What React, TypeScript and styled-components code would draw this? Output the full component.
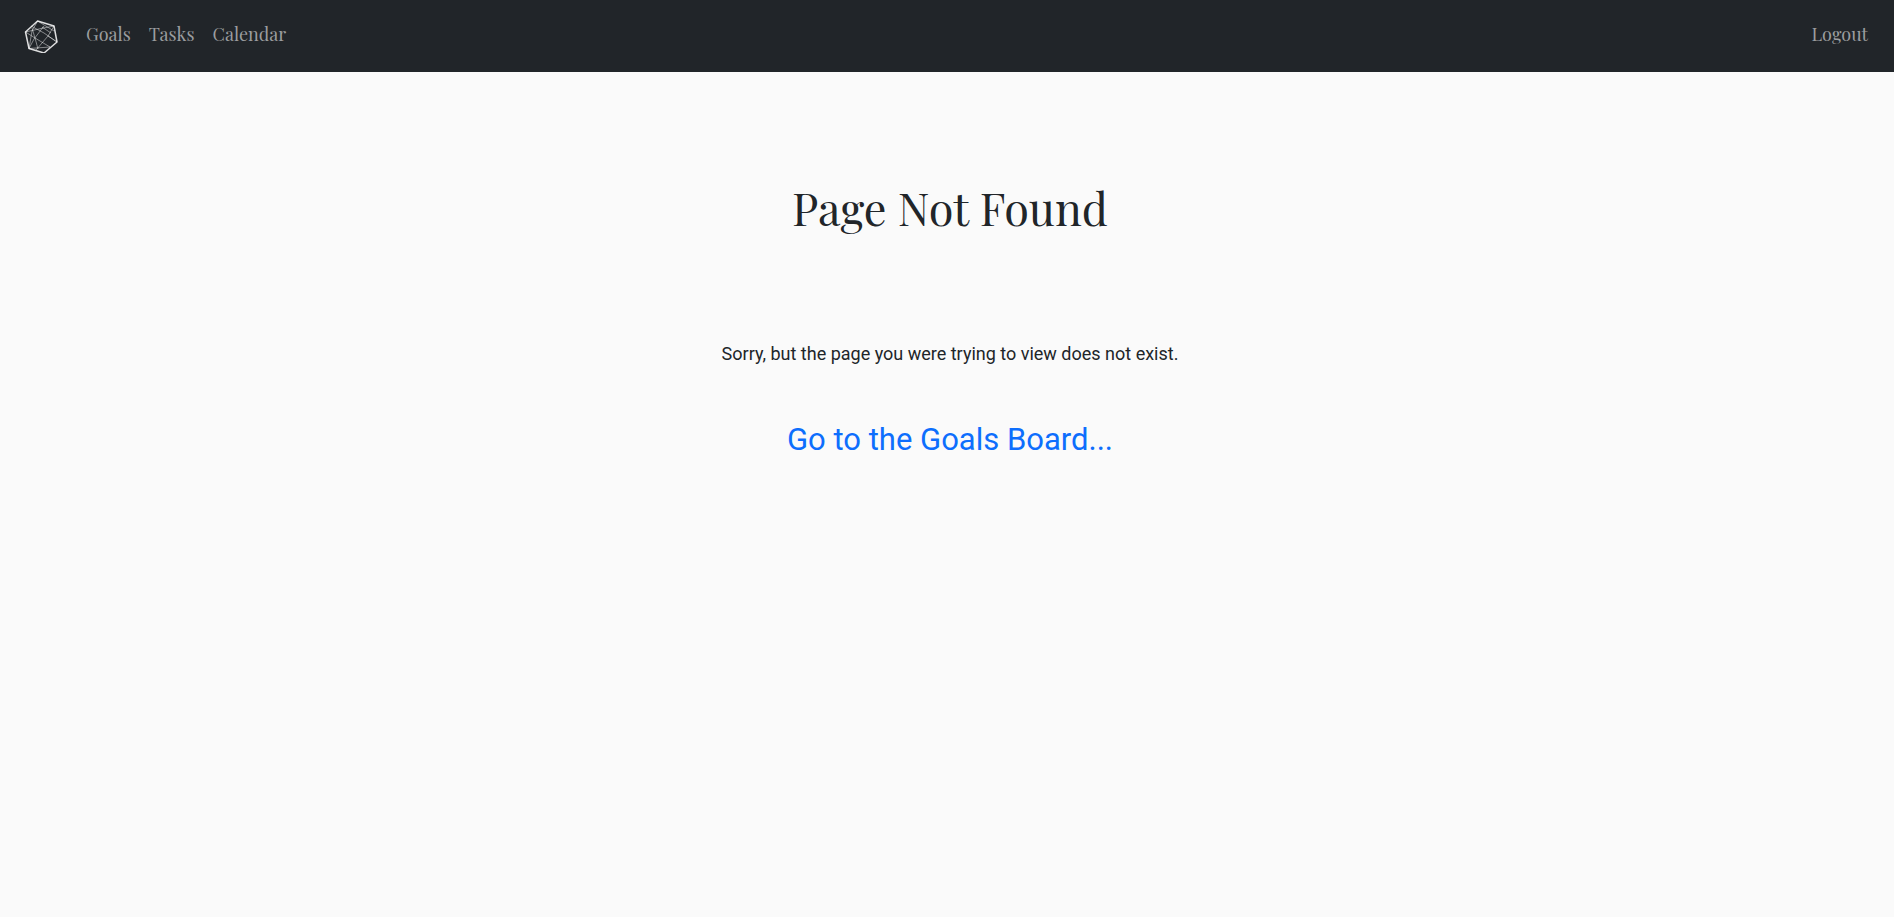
import React from "react";
import styled, { createGlobalStyle } from "styled-components";

const GlobalStyle = createGlobalStyle`
  *, *::before, *::after { box-sizing: border-box; }
  body {
    margin: 0;
    min-height: 100vh;
    background: #fafafa;
    color: #212529;
    font-family: Roboto, sans-serif;
    font-size: 18px;
    line-height: 27px;
  }
`;

const serif = `"Playfair Display", "Liberation Serif", serif`;

const Navbar = styled.nav`
  display: flex;
  align-items: center;
  min-height: 72px;
  padding: 0 17px 0 24px;
  background: #212529;
`;

const Brand = styled.a`
  display: flex;
  margin-right: 19px;
`;

const NavList = styled.ul<{ $end?: boolean }>`
  display: flex;
  margin: 0;
  margin-left: ${({ $end }) => ($end ? "auto" : "0")};
  padding: 0 0 4px;
  list-style: none;
`;

const NavLink = styled.a`
  display: block;
  padding: 8px 9px;
  color: #9b9d9f;
  font-family: ${serif};
  font-size: 18px;
  text-decoration: none;
`;

const Main = styled.main`
  display: flex;
  flex-direction: column;
  align-items: center;
  padding: 108px 8px 48px 14px;
  text-align: center;
`;

const Title = styled.h1`
  margin: 0 0 106px;
  font-family: ${serif};
  font-size: 45px;
  font-weight: 400;
  line-height: 54px;
`;

const Message = styled.p`
  margin: 0 0 54px;
`;

const BoardLink = styled.a`
  color: #0d6efd;
  font-size: 31px;
  line-height: 38px;
  text-decoration: none;
`;

const Logo = () => (
  <svg width="34" height="34" viewBox="0 0 34 34" fill="none" stroke="#fff" aria-hidden="true">
    <path
      d="M13.6 2 30 7 33 23 20 34 5 29.500 1.500 13Z"
      strokeWidth="1.5"
      strokeOpacity="0.85"
      strokeLinejoin="round"
    />
    <path
      d="M1.500 13 17 9.500 30 7M1.500 13 11 19 26 28M13.600 2 8 12 5 29.500M7 7 20 14 33 23M20 7 10 20 5 29.500M30 7 24 17 12 31M13.600 2 30 12M8 9 11 19 14 30M5 29.500 26 28M24 17 33 23M18 8 27 14"
      strokeWidth="1"
      strokeOpacity="0.45"
    />
  </svg>
);

export default function App() {
  return (
    <>
      <GlobalStyle />
      <Navbar>
        <Brand href="#" aria-label="Home"><Logo /></Brand>
        <NavList>
          <li><NavLink href="#goals">Goals</NavLink></li>
          <li><NavLink href="#tasks">Tasks</NavLink></li>
          <li><NavLink href="#calendar">Calendar</NavLink></li>
        </NavList>
        <NavList $end>
          <li><NavLink href="#logout">Logout</NavLink></li>
        </NavList>
      </Navbar>
      <Main>
        <Title>Page Not Found</Title>
        <Message>Sorry, but the page you were trying to view does not exist.</Message>
        <BoardLink href="#goals">Go to the Goals Board...</BoardLink>
      </Main>
    </>
  );
}
